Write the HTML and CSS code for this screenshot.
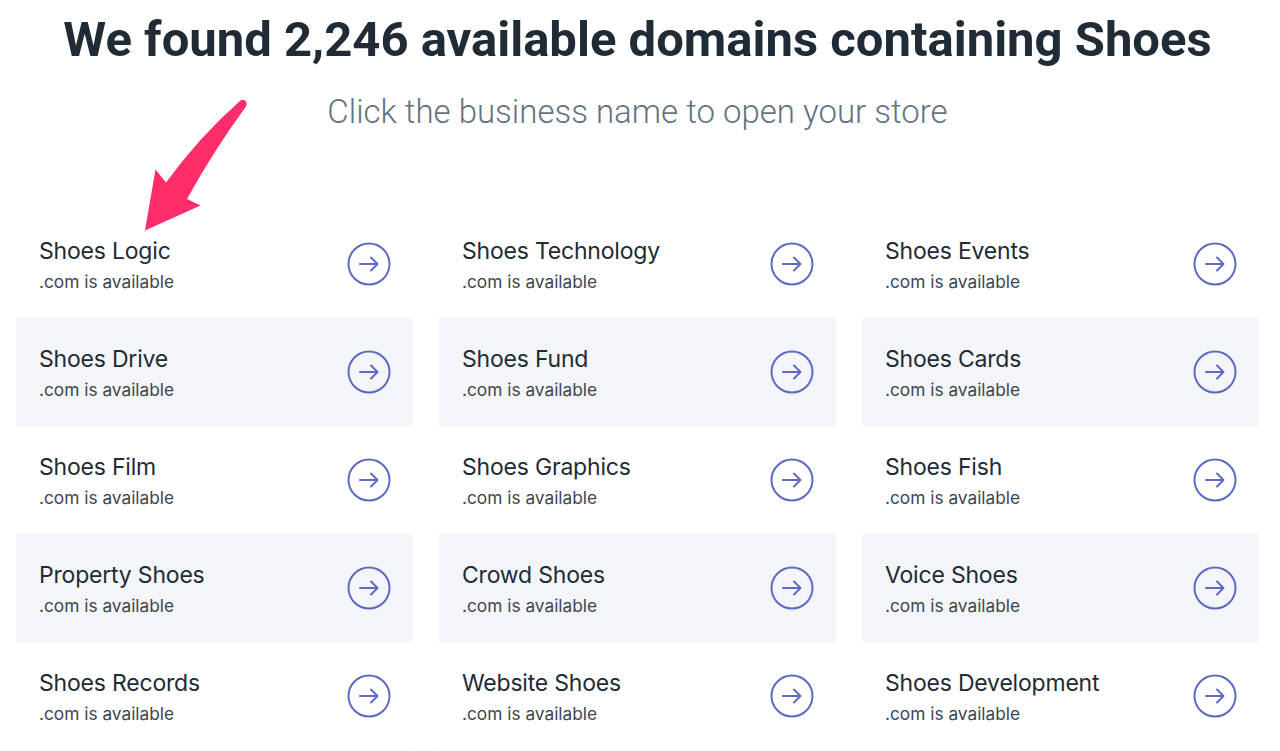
FILE: index.html
```html
<!DOCTYPE html>
<html lang="en">
<head>
    <meta charset="UTF-8">
    <meta name="viewport" content="width=device-width, initial-scale=1.0">
    <title>Available Domains - Shoes</title>
    <link rel="stylesheet" href="styles.css">
</head>
<body>

    <h1 class="title">We found 2,246 available domains containing Shoes</h1>
    <p class="subtitle">Click the business name to open your store</p>

    <!-- Annotation arrow pointing at the first result -->
    <svg class="pointer" width="130" height="140" viewBox="130 95 130 140">
        <path d="M240.5 100.5
                 Q243.5 98.5 246 101.5
                 Q247.5 104 246 106.5
                 Q214 150 187 199
                 L200.5 205.5
                 L145 230.5
                 L155.5 169.5
                 L166 182.5
                 Q200 136 240.5 100.5 Z" fill="#ff2e6a"/>
    </svg>

    <div class="results">
        <a class="result" href="#">
            <div class="info">
                <div class="name">Shoes Logic</div>
                <div class="avail">.com is available</div>
            </div>
            <svg class="go" width="44" height="44" viewBox="0 0 44 44"><circle cx="22" cy="22" r="20.5"/><path d="M13 22H30.5M24 15.5L30.5 22L24 28.5"/></svg>
        </a>
        <a class="result" href="#">
            <div class="info">
                <div class="name">Shoes Technology</div>
                <div class="avail">.com is available</div>
            </div>
            <svg class="go" width="44" height="44" viewBox="0 0 44 44"><circle cx="22" cy="22" r="20.5"/><path d="M13 22H30.5M24 15.5L30.5 22L24 28.5"/></svg>
        </a>
        <a class="result" href="#">
            <div class="info">
                <div class="name">Shoes Events</div>
                <div class="avail">.com is available</div>
            </div>
            <svg class="go" width="44" height="44" viewBox="0 0 44 44"><circle cx="22" cy="22" r="20.5"/><path d="M13 22H30.5M24 15.5L30.5 22L24 28.5"/></svg>
        </a>

        <a class="result shaded" href="#">
            <div class="info">
                <div class="name">Shoes Drive</div>
                <div class="avail">.com is available</div>
            </div>
            <svg class="go" width="44" height="44" viewBox="0 0 44 44"><circle cx="22" cy="22" r="20.5"/><path d="M13 22H30.5M24 15.5L30.5 22L24 28.5"/></svg>
        </a>
        <a class="result shaded" href="#">
            <div class="info">
                <div class="name">Shoes Fund</div>
                <div class="avail">.com is available</div>
            </div>
            <svg class="go" width="44" height="44" viewBox="0 0 44 44"><circle cx="22" cy="22" r="20.5"/><path d="M13 22H30.5M24 15.5L30.5 22L24 28.5"/></svg>
        </a>
        <a class="result shaded" href="#">
            <div class="info">
                <div class="name">Shoes Cards</div>
                <div class="avail">.com is available</div>
            </div>
            <svg class="go" width="44" height="44" viewBox="0 0 44 44"><circle cx="22" cy="22" r="20.5"/><path d="M13 22H30.5M24 15.5L30.5 22L24 28.5"/></svg>
        </a>

        <a class="result" href="#">
            <div class="info">
                <div class="name">Shoes Film</div>
                <div class="avail">.com is available</div>
            </div>
            <svg class="go" width="44" height="44" viewBox="0 0 44 44"><circle cx="22" cy="22" r="20.5"/><path d="M13 22H30.5M24 15.5L30.5 22L24 28.5"/></svg>
        </a>
        <a class="result" href="#">
            <div class="info">
                <div class="name">Shoes Graphics</div>
                <div class="avail">.com is available</div>
            </div>
            <svg class="go" width="44" height="44" viewBox="0 0 44 44"><circle cx="22" cy="22" r="20.5"/><path d="M13 22H30.5M24 15.5L30.5 22L24 28.5"/></svg>
        </a>
        <a class="result" href="#">
            <div class="info">
                <div class="name">Shoes Fish</div>
                <div class="avail">.com is available</div>
            </div>
            <svg class="go" width="44" height="44" viewBox="0 0 44 44"><circle cx="22" cy="22" r="20.5"/><path d="M13 22H30.5M24 15.5L30.5 22L24 28.5"/></svg>
        </a>

        <a class="result shaded" href="#">
            <div class="info">
                <div class="name">Property Shoes</div>
                <div class="avail">.com is available</div>
            </div>
            <svg class="go" width="44" height="44" viewBox="0 0 44 44"><circle cx="22" cy="22" r="20.5"/><path d="M13 22H30.5M24 15.5L30.5 22L24 28.5"/></svg>
        </a>
        <a class="result shaded" href="#">
            <div class="info">
                <div class="name">Crowd Shoes</div>
                <div class="avail">.com is available</div>
            </div>
            <svg class="go" width="44" height="44" viewBox="0 0 44 44"><circle cx="22" cy="22" r="20.5"/><path d="M13 22H30.5M24 15.5L30.5 22L24 28.5"/></svg>
        </a>
        <a class="result shaded" href="#">
            <div class="info">
                <div class="name">Voice Shoes</div>
                <div class="avail">.com is available</div>
            </div>
            <svg class="go" width="44" height="44" viewBox="0 0 44 44"><circle cx="22" cy="22" r="20.5"/><path d="M13 22H30.5M24 15.5L30.5 22L24 28.5"/></svg>
        </a>

        <a class="result" href="#">
            <div class="info">
                <div class="name">Shoes Records</div>
                <div class="avail">.com is available</div>
            </div>
            <svg class="go" width="44" height="44" viewBox="0 0 44 44"><circle cx="22" cy="22" r="20.5"/><path d="M13 22H30.5M24 15.5L30.5 22L24 28.5"/></svg>
        </a>
        <a class="result" href="#">
            <div class="info">
                <div class="name">Website Shoes</div>
                <div class="avail">.com is available</div>
            </div>
            <svg class="go" width="44" height="44" viewBox="0 0 44 44"><circle cx="22" cy="22" r="20.5"/><path d="M13 22H30.5M24 15.5L30.5 22L24 28.5"/></svg>
        </a>
        <a class="result" href="#">
            <div class="info">
                <div class="name">Shoes Development</div>
                <div class="avail">.com is available</div>
            </div>
            <svg class="go" width="44" height="44" viewBox="0 0 44 44"><circle cx="22" cy="22" r="20.5"/><path d="M13 22H30.5M24 15.5L30.5 22L24 28.5"/></svg>
        </a>

        <a class="result shaded" href="#"></a>
        <a class="result shaded" href="#"></a>
        <a class="result shaded" href="#"></a>
    </div>

</body>
</html>
```

FILE: styles.css
```css
body {
    font-family: Roboto, "Liberation Sans", sans-serif;
    margin: 0;
    padding: 0 21px 0 16px;
    background-color: #ffffff;
    color: #212b36;
    position: relative;
}
.title {
    margin: 0;
    padding-top: 12px;
    font-size: 49px;
    line-height: 56px;
    font-weight: 700;
    text-align: center;
    color: #212b36;
}
.subtitle {
    margin: 22px 0 0;
    font-size: 33px;
    line-height: 44px;
    font-weight: 300;
    text-align: center;
    color: #637381;
}
.pointer {
    position: absolute;
    left: 130px;
    top: 95px;
}
.results {
    display: grid;
    grid-template-columns: repeat(3, 1fr);
    column-gap: 26px;
    margin-top: 76px;
}
.result {
    display: flex;
    align-items: center;
    justify-content: space-between;
    height: 108px;
    padding: 0 22px 0 23px;
    text-decoration: none;
    color: inherit;
}
.shaded {
    background-color: #f4f5f8;
}
.info {
    padding-top: 3px;
}
.name {
    font-family: Inter, "Liberation Sans", sans-serif;
    font-size: 23px;
    line-height: 30px;
    color: #212b36;
    letter-spacing: -0.2px;
}
.avail {
    font-family: Inter, "Liberation Sans", sans-serif;
    font-size: 17.3px;
    line-height: 26px;
    margin-top: 3px;
    color: #3d4650;
}
.go {
    fill: none;
    stroke: #5c6ac4;
    stroke-width: 2;
    stroke-linecap: round;
    stroke-linejoin: round;
}
```
